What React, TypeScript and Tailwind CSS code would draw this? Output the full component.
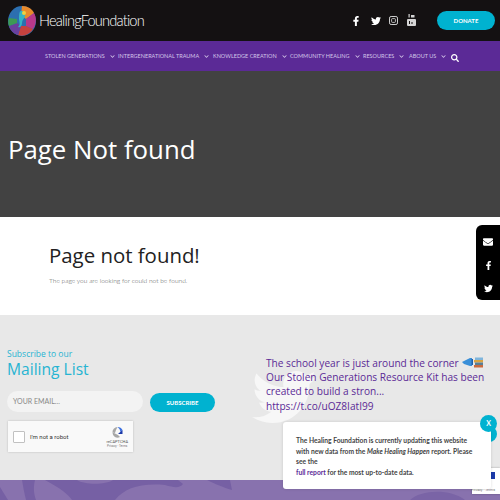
import React from "react";
import { FaFacebookF, FaTwitter, FaEnvelope, FaSearch, FaChevronDown } from "react-icons/fa";

const nav = [
  { t: "STOLEN GENERATIONS", w: "w-[73px]" },
  { t: "INTERGENERATIONAL TRAUMA", w: "w-[95px]" },
  { t: "KNOWLEDGE CREATION", w: "w-[77px]" },
  { t: "COMMUNITY HEALING", w: "w-[73px]" },
  { t: "RESOURCES", w: "w-[46px]" },
  { t: "ABOUT US", w: "w-[43px]" },
];

function Logo() {
  return (
    <svg width="28" height="30" viewBox="0 0 28 30" className="shrink-0">
      <ellipse cx="14" cy="15" rx="14" ry="15" fill="#2c6fb0" />
      <path d="M14 0c6 0 10 3 12 7l-8 6-5-4z" fill="#e8892b" />
      <path d="M26 7c3 5 2 12-1 16l-7-3 0-7z" fill="#b8388a" />
      <path d="M25 23c-3 5-9 8-15 6l3-9 5 0z" fill="#c6423f" />
      <path d="M10 29c-4-1-8-5-9-9l8-3 4 3z" fill="#6a3f9e" />
      <path d="M1 20c-1-3-1-5 0-8l8 1 0 4z" fill="#3d9a54" />
      <path d="M13 5c3 0 5 2 4 5s-3 4-3 7-2 5-4 4c3-3 1-5 1-8s0-8 2-8z" fill="#35b3c4" />
      <circle cx="16" cy="7" r="2" fill="#f0d13c" />
    </svg>
  );
}

function Instagram() {
  return (
    <svg width="9" height="9" viewBox="0 0 9 9" className="mr-[9px]">
      <rect x="0.5" y="0.5" width="8" height="8" rx="1.6" fill="none" stroke="#cfcfcf" strokeWidth="1" />
      <rect x="2.6" y="2.6" width="3.8" height="3.8" rx="0.8" fill="none" stroke="#cfcfcf" strokeWidth="0.9" />
    </svg>
  );
}

function Youtube() {
  return (
    <svg width="9" height="12" viewBox="0 0 9 12" className="mr-[21px] mb-[1px]">
      <rect x="1.5" y="0" width="1.2" height="3.5" fill="#d5d5d5" />
      <rect x="4" y="1" width="3.5" height="2.5" fill="#d5d5d5" />
      <rect x="0" y="5" width="9" height="7" rx="1" fill="#d5d5d5" />
      <rect x="2" y="7" width="1" height="3" fill="#141112" />
      <rect x="4.5" y="8" width="1" height="2" fill="#141112" />
    </svg>
  );
}

function Header() {
  return (
    <header className="h-[41px] bg-[#141112] flex items-center pl-2 pr-[5px]">
      <Logo />
      <span className="ml-[3px] mt-[1px] text-[14.6px] tracking-[-0.8px] text-white font-['Lato',sans-serif] font-light">HealingFoundation</span>
      <div className="ml-auto flex items-center text-white">
        <FaFacebookF size={10} className="mr-[10px]" />
        <FaTwitter size={10} className="mr-[8px]" />
        <Instagram />
        <Youtube />
        <div className="w-[58px] h-[19px] rounded-full bg-[#00b2d0] flex items-center justify-center text-[6px] font-bold font-['Lato',sans-serif]">DONATE</div>
      </div>
    </header>
  );
}

function Nav() {
  return (
    <nav className="h-[30px] bg-[#5b2a96] flex items-center pl-[45px] text-[#d3c5e8] font-['Lato',sans-serif] text-[5.5px]">
      {nav.map((n) => (
        <div key={n.t} className={`flex items-center ${n.w}`}>
          <span className="whitespace-nowrap">{n.t}</span>
          <FaChevronDown size={5} className="ml-[5px] shrink-0" />
        </div>
      ))}
      <FaSearch size={8} className="ml-[-1px] mt-[3px] text-white" />
    </nav>
  );
}

function Hero() {
  return (
    <section className="h-[146px] bg-[#424242] flex items-center pl-2 pt-[11px]">
      <h1 className="text-[25.8px] leading-none text-white font-['Open_Sans',sans-serif]">Page Not found</h1>
    </section>
  );
}

function Main() {
  return (
    <section className="h-[98px] bg-white pl-[49px] pt-[25px]">
      <h2 className="text-[20.4px] leading-[26px] text-[#222] font-['Open_Sans',sans-serif]">Page not found!</h2>
      <p className="mt-[7px] text-[6.6px] leading-[10px] text-[#555] font-['Lato',sans-serif] font-light">The page you are looking for could not be found.</p>
    </section>
  );
}

function Captcha() {
  return (
    <div className="mt-[9px] w-[125px] h-[31px] bg-[#f9f9f9] shadow-[0_0_2px_rgba(0,0,0,0.2)] flex items-center">
      <div className="ml-[5px] w-3 h-3 bg-white border border-[#c1c1c1] rounded-[1px]" />
      <span className="ml-[5px] text-[6px] text-[#333] font-['Roboto',sans-serif]">I'm not a robot</span>
      <div className="ml-auto mr-[5px] flex flex-col items-center">
        <svg width="13" height="13" viewBox="0 0 13 13">
          <path d="M6.5 1a5.5 5.5 0 0 1 5 3l-2 2-1-3z" fill="#3b6fe0" />
          <path d="M11.5 4v4H7z" fill="#1c3aa9" />
          <path d="M1.5 6.5a5 5 0 0 1 5-5.5L5 4 4 7z" fill="#a6a6a6" />
          <path d="M1.5 6.5A5 5 0 0 0 9 11L7 9 3 7z" fill="#a6a6a6" />
        </svg>
        <span className="text-[4px] leading-[5px] text-[#555] font-['Roboto',sans-serif]">reCAPTCHA</span>
        <span className="text-[3px] leading-[4px] text-[#777] font-['Roboto',sans-serif]">Privacy - Terms</span>
      </div>
    </div>
  );
}

function Emojis() {
  return (
    <span className="inline-flex items-center align-[-1px] ml-[1px]">
      <svg width="22" height="11" viewBox="0 0 22 11">
        <path d="M0 5l2-1 6-3h2v8H8L2 7z" fill="#3a8fd8" />
        <rect x="9.5" y="2" width="1.5" height="6" fill="#1f5fa8" />
        <rect x="13" y="0.5" width="8" height="2.5" fill="#7fb5dc" />
        <rect x="12" y="3" width="9" height="2.5" fill="#d9a441" />
        <rect x="13" y="5.5" width="8" height="2.5" fill="#5a7f96" />
        <rect x="12" y="8" width="9" height="2.5" fill="#c96a3f" />
      </svg>
    </span>
  );
}

function Footer() {
  return (
    <section className="h-[165px] bg-[#e8e8e8] relative overflow-hidden flex">
      <div className="w-[258px] pl-[8px] pt-[33px] shrink-0">
        <p className="text-[8.5px] leading-[11px] text-[#27b4d2] font-['Open_Sans',sans-serif] ml-[-1px]">Subscribe to our</p>
        <p className="text-[15.6px] leading-[21px] text-[#27b4d2] font-['Open_Sans',sans-serif] ml-[-1px]">Mailing List</p>
        <div className="mt-[11px] flex items-center ml-[-1px]">
          <div className="w-[136px] h-[21px] rounded-full bg-[#f3f3f3] pl-[6px] flex items-center text-[7px] text-[#888] font-['Lato',sans-serif]">YOUR EMAIL...</div>
          <div className="ml-[7px] mt-[1px] w-[65px] h-[19px] rounded-full bg-[#00b2d0] flex items-center justify-center text-[6px] font-bold text-white font-['Lato',sans-serif]">SUBSCRIBE</div>
        </div>
        <Captcha />
      </div>
      <div className="pl-[8px] pt-[41px] relative">
        <FaTwitter size={64} className="absolute left-[-6px] top-[50px] text-[#f7f7f7]" />
        <p className="relative whitespace-nowrap text-[10.15px] leading-[14.2px] text-[#5b2a96] font-['Open_Sans',sans-serif]">
          The school year is just around the corner <Emojis /><br />
          Our Stolen Generations Resource Kit has been<br />
          created to build a stron...<br />
          https://t.co/uOZ8IatI99
        </p>
      </div>
    </section>
  );
}

function Band() {
  return (
    <section className="h-[20px] bg-[#8872ae] relative overflow-hidden">
      <svg className="absolute inset-0" width="500" height="20" viewBox="0 0 500 20">
        <path d="M45 0C60 8 68 14 72 20L115 20C125 8 140 3 165 5C175 8 180 8 183 4L178 0H113C105 5 85 5 77 0Z" fill="#7660a4" />
        <path d="M22 0L35 0C33 8 34 14 36 20L26 20C24 12 23 6 22 0Z" fill="#7660a4" />
        <path d="M207 0C215 4 225 8 232 10L230 0Z" fill="#7660a4" />
        <path d="M0 7L8 20H0Z" fill="#7660a4" />
        <path d="M410 20C420 10 450 8 465 20Z" fill="#7a64a6" />
      </svg>
    </section>
  );
}

function Overlays() {
  return (
    <>
      <div className="absolute right-0 top-[225px] w-[24px] h-[75px] bg-black rounded-l-[6px] flex flex-col items-center justify-start gap-[14px] pt-[12px] text-white">
        <FaEnvelope size={10} />
        <FaFacebookF size={9} />
        <FaTwitter size={9} />
      </div>
      <div className="absolute right-0 top-[468px] w-[28px] h-[26px] bg-white shadow-[0_0_2px_rgba(0,0,0,0.3)] flex flex-col items-end pr-[5px] pt-[4px]">
        <div className="w-[7px] h-[7px] bg-[#1c3aa9]" />
        <span className="mt-[9px] text-[3.5px] leading-[4px] text-[#777] font-['Roboto',sans-serif] whitespace-nowrap">Privacy - Terms</span>
      </div>
      <div className="absolute left-[481px] top-[426px] w-[16px] h-[16px] rounded-full bg-[#00b2d0]" />
      <div className="absolute left-[283px] top-[422px] w-[208px] h-[67px] bg-white rounded-[3px] shadow-[0_0_3px_rgba(0,0,0,0.15)] pl-[13px] pt-[13px] text-[6.7px] leading-[10.5px] font-bold text-[#444] font-['Lato',sans-serif]">
        The Healing Foundation is currently updating this website<br />
        with new data from the <i>Make Healing Happen</i> report. Please<br />
        see the<br />
        <span className="text-[#5b2a96]">full report</span> for the most up-to-date data.
      </div>
      <div className="absolute left-[480px] top-[415px] w-[17px] h-[17px] rounded-full bg-[#00b2d0] flex items-center justify-center text-white text-[7px] font-bold font-['Lato',sans-serif]">X</div>
    </>
  );
}

export default function App() {
  return (
    <div className="w-[500px] h-[500px] relative overflow-hidden">
      <Header />
      <Nav />
      <Hero />
      <Main />
      <Footer />
      <Band />
      <Overlays />
    </div>
  );
}
